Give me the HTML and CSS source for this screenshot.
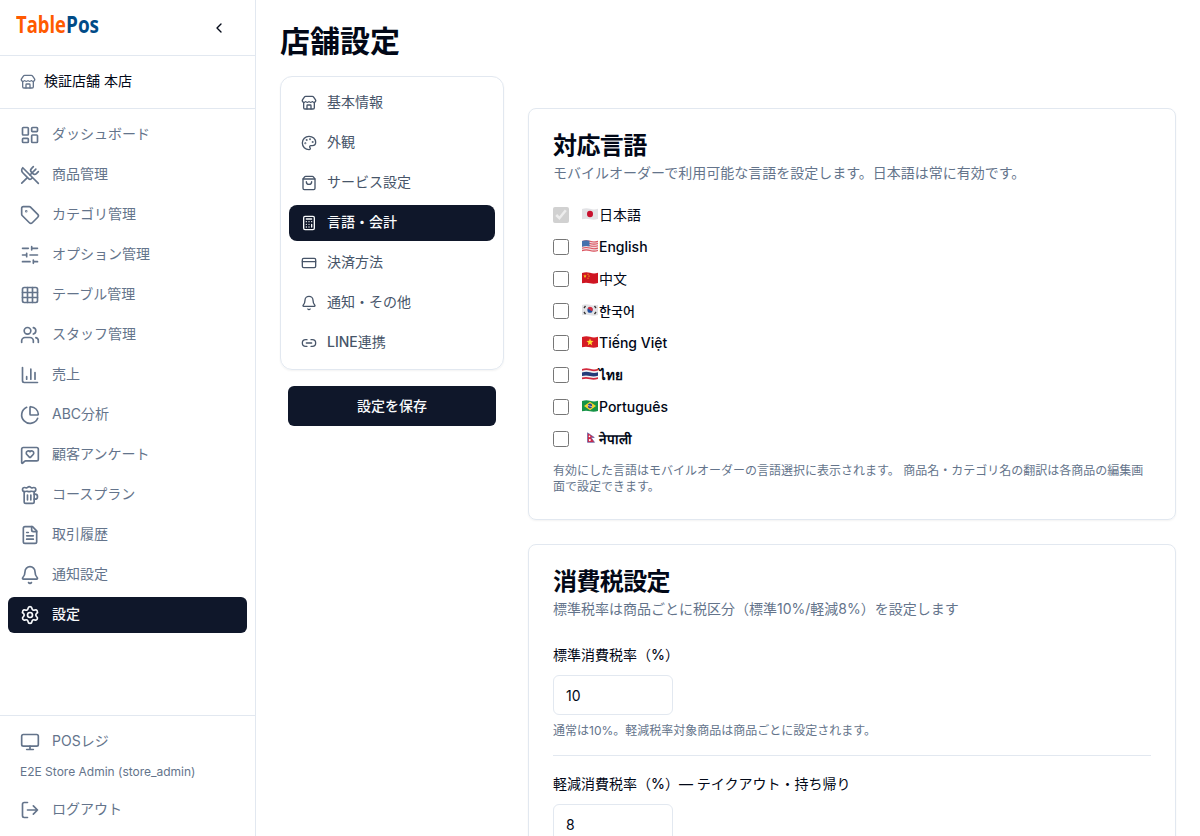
FILE: index.html
```
<!DOCTYPE html>
<html lang="ja">
<head>
    <meta charset="UTF-8">
    <meta name="viewport" content="width=device-width, initial-scale=1.0">
    <title>TablePos - 店舗設定</title>
    <link rel="stylesheet" href="styles.css">
</head>
<body>
    <svg class="defs" width="0" height="0">
        <symbol id="i-store" viewBox="0 0 24 24"><path d="M15 21v-5a1 1 0 0 0-1-1h-4a1 1 0 0 0-1 1v5"/><path d="M17.774 10.31a1.12 1.12 0 0 0-1.549 0 2.5 2.5 0 0 1-3.451 0 1.12 1.12 0 0 0-1.548 0 2.5 2.5 0 0 1-3.452 0 1.12 1.12 0 0 0-1.549 0 2.5 2.5 0 0 1-3.77-3.248l2.889-4.184A2 2 0 0 1 7 2h10a2 2 0 0 1 1.653.873l2.895 4.192a2.5 2.5 0 0 1-3.774 3.244"/><path d="M4 10.95V19a2 2 0 0 0 2 2h12a2 2 0 0 0 2-2v-8.05"/></symbol>
        <symbol id="i-bell" viewBox="0 0 24 24"><path d="M10.268 21a2 2 0 0 0 3.464 0"/><path d="M3.262 15.326A1 1 0 0 0 4 17h16a1 1 0 0 0 .74-1.673C19.41 13.956 18 12.499 18 8A6 6 0 0 0 6 8c0 4.499-1.411 5.956-2.738 7.326"/></symbol>
    </svg>

    <div class="app">
        <aside class="sidebar">
            <div class="sidebar-head">
                <svg class="logo" width="86" height="42" viewBox="0 0 86 42"><text class="logo-a" x="0" y="27" textLength="50" lengthAdjust="spacingAndGlyphs">Table</text><text class="logo-b" x="50" y="27" textLength="33" lengthAdjust="spacingAndGlyphs">Pos</text></svg>
                <button class="collapse"><svg class="icon" width="16" height="16" viewBox="0 0 24 24"><path d="m15 18-6-6 6-6"/></svg></button>
            </div>
            <div class="store-name">
                <svg class="icon" width="16" height="16"><use href="#i-store"/></svg>
                <span>検証店舗 本店</span>
            </div>
            <nav class="menu">
                <a class="menu-item"><svg class="icon" width="20" height="20" viewBox="0 0 24 24"><rect width="7" height="9" x="3" y="3" rx="1"/><rect width="7" height="5" x="14" y="3" rx="1"/><rect width="7" height="9" x="14" y="12" rx="1"/><rect width="7" height="5" x="3" y="16" rx="1"/></svg>ダッシュボード</a>
                <a class="menu-item"><svg class="icon" width="20" height="20" viewBox="0 0 24 24"><path d="m16 2-2.3 2.3a3 3 0 0 0 0 4.2l1.8 1.8a3 3 0 0 0 4.2 0L22 8"/><path d="M15 15 3.3 3.3a4.2 4.2 0 0 0 0 6l7.3 7.3c.7.7 2 .7 2.8 0L15 15Zm0 0 7 7"/><path d="m2.1 21.8 6.4-6.3"/><path d="m19 5-7 7"/></svg>商品管理</a>
                <a class="menu-item"><svg class="icon" width="20" height="20" viewBox="0 0 24 24"><path d="M12.586 2.586A2 2 0 0 0 11.172 2H4a2 2 0 0 0-2 2v7.172a2 2 0 0 0 .586 1.414l8.704 8.704a2.426 2.426 0 0 0 3.42 0l6.58-6.58a2.426 2.426 0 0 0 0-3.42z"/><circle cx="7.5" cy="7.5" r=".5"/></svg>カテゴリ管理</a>
                <a class="menu-item"><svg class="icon" width="20" height="20" viewBox="0 0 24 24"><path d="M21 4h-7M10 4H3M21 12h-9M8 12H3M21 20h-5M12 20H3M14 2v4M8 10v4M16 18v4"/></svg>オプション管理</a>
                <a class="menu-item"><svg class="icon" width="20" height="20" viewBox="0 0 24 24"><rect width="18" height="18" x="3" y="3" rx="2"/><path d="M3 9h18M3 15h18M9 3v18M15 3v18"/></svg>テーブル管理</a>
                <a class="menu-item"><svg class="icon" width="20" height="20" viewBox="0 0 24 24"><path d="M16 21v-2a4 4 0 0 0-4-4H6a4 4 0 0 0-4 4v2"/><circle cx="9" cy="7" r="4"/><path d="M22 21v-2a4 4 0 0 0-3-3.87"/><path d="M16 3.13a4 4 0 0 1 0 7.75"/></svg>スタッフ管理</a>
                <a class="menu-item"><svg class="icon" width="20" height="20" viewBox="0 0 24 24"><path d="M3 3v16a2 2 0 0 0 2 2h16"/><path d="M18 17V9M13 17V5M8 17v-3"/></svg>売上</a>
                <a class="menu-item"><svg class="icon" width="20" height="20" viewBox="0 0 24 24"><path d="M21 12c.552 0 1.005-.449.95-.998a10 10 0 0 0-8.953-8.951c-.55-.055-.998.398-.998.95v8a1 1 0 0 0 1 1z"/><path d="M21.21 15.89A10 10 0 1 1 8 2.83"/></svg>ABC分析</a>
                <a class="menu-item"><svg class="icon" width="20" height="20" viewBox="0 0 24 24"><path d="M22 17a2 2 0 0 1-2 2H6.828a2 2 0 0 0-1.414.586l-2.202 2.202A.71.71 0 0 1 2 21.286V5a2 2 0 0 1 2-2h16a2 2 0 0 1 2 2z"/><path d="M7.5 9.5c0 .687.265 1.383.697 1.844l3.009 3.264a1.14 1.14 0 0 0 .407.314 1 1 0 0 0 .783-.004 1.14 1.14 0 0 0 .398-.31l3.008-3.264A2.77 2.77 0 0 0 16.5 9.5 2.5 2.5 0 0 0 12 8a2.5 2.5 0 0 0-4.5 1.5"/></svg>顧客アンケート</a>
                <a class="menu-item"><svg class="icon" width="20" height="20" viewBox="0 0 24 24"><path d="M17 11h1a3 3 0 0 1 0 6h-1M9 12v6M13 12v6"/><path d="M14 7.5c-1 0-1.44.5-3 .5s-2-.5-3-.5-1.72.5-2.5.5a2.5 2.5 0 0 1 0-5c.78 0 1.57.5 2.5.5S9.44 2 11 2s2 1.5 3 1.5 1.72-.5 2.5-.5a2.5 2.5 0 0 1 0 5c-.78 0-1.5-.5-2.5-.5Z"/><path d="M5 8v12a2 2 0 0 0 2 2h8a2 2 0 0 0 2-2V8"/></svg>コースプラン</a>
                <a class="menu-item"><svg class="icon" width="20" height="20" viewBox="0 0 24 24"><path d="M15 2H6a2 2 0 0 0-2 2v16a2 2 0 0 0 2 2h12a2 2 0 0 0 2-2V7Z"/><path d="M14 2v4a2 2 0 0 0 2 2h4M10 9H8M16 13H8M16 17H8"/></svg>取引履歴</a>
                <a class="menu-item"><svg class="icon" width="20" height="20"><use href="#i-bell"/></svg>通知設定</a>
                <a class="menu-item active"><svg class="icon" width="20" height="20" viewBox="0 0 24 24"><path d="M9.671 4.136a2.34 2.34 0 0 1 4.659 0 2.34 2.34 0 0 0 3.319 1.915 2.34 2.34 0 0 1 2.33 4.033 2.34 2.34 0 0 0 0 3.831 2.34 2.34 0 0 1-2.33 4.033 2.34 2.34 0 0 0-3.319 1.915 2.34 2.34 0 0 1-4.659 0 2.34 2.34 0 0 0-3.32-1.915 2.34 2.34 0 0 1-2.33-4.033 2.34 2.34 0 0 0 0-3.831A2.34 2.34 0 0 1 6.35 6.051a2.34 2.34 0 0 0 3.319-1.915"/><circle cx="12" cy="12" r="3"/></svg>設定</a>
            </nav>
            <div class="sidebar-foot">
                <a class="menu-item"><svg class="icon" width="20" height="20" viewBox="0 0 24 24"><rect width="20" height="14" x="2" y="3" rx="2"/><path d="M8 21h8M12 17v4"/></svg>POSレジ</a>
                <div class="user">E2E Store Admin (store_admin)</div>
                <a class="menu-item"><svg class="icon" width="20" height="20" viewBox="0 0 24 24"><path d="M9 21H5a2 2 0 0 1-2-2V5a2 2 0 0 1 2-2h4M16 17l5-5-5-5M21 12H9"/></svg>ログアウト</a>
            </div>
        </aside>

        <main class="main">
            <h1>店舗設定</h1>
            <div class="columns">
                <div class="tabs-column">
                    <div class="tabs">
                        <a class="tab"><svg class="icon" width="16" height="16"><use href="#i-store"/></svg>基本情報</a>
                        <a class="tab"><svg class="icon" width="16" height="16" viewBox="0 0 24 24"><path d="M12 22a1 1 0 0 1 0-20 10 9 0 0 1 10 9 5 5 0 0 1-5 5h-2.25a1.75 1.75 0 0 0-1.4 2.8l.3.4a1.75 1.75 0 0 1-1.4 2.8z"/><circle cx="13.5" cy="6.5" r=".5"/><circle cx="17.5" cy="10.5" r=".5"/><circle cx="6.5" cy="12.5" r=".5"/><circle cx="8.5" cy="7.5" r=".5"/></svg>外観</a>
                        <a class="tab"><svg class="icon" width="16" height="16" viewBox="0 0 24 24"><path d="M16 10a4 4 0 0 1-8 0M3.103 6.034h17.794"/><path d="M3.4 5.467a2 2 0 0 0-.4 1.2V20a2 2 0 0 0 2 2h14a2 2 0 0 0 2-2V6.667a2 2 0 0 0-.4-1.2l-2-2.667A2 2 0 0 0 17 2H7a2 2 0 0 0-1.6.8z"/></svg>サービス設定</a>
                        <a class="tab active"><svg class="icon" width="16" height="16" viewBox="0 0 24 24"><rect width="16" height="20" x="4" y="2" rx="2"/><path d="M8 6h8M16 14v4M16 10h.01M12 10h.01M8 10h.01M12 14h.01M8 14h.01M12 18h.01M8 18h.01"/></svg>言語・会計</a>
                        <a class="tab"><svg class="icon" width="16" height="16" viewBox="0 0 24 24"><rect width="20" height="14" x="2" y="5" rx="2"/><path d="M2 10h20"/></svg>決済方法</a>
                        <a class="tab"><svg class="icon" width="16" height="16"><use href="#i-bell"/></svg>通知・その他</a>
                        <a class="tab"><svg class="icon" width="16" height="16" viewBox="0 0 24 24"><path d="M9 17H7A5 5 0 0 1 7 7h2M15 7h2a5 5 0 1 1 0 10h-2M8 12h8"/></svg><span><span class="latin">LINE</span>連携</span></a>
                    </div>
                    <button class="save">設定を保存</button>
                </div>

                <div class="panels">
                    <section class="card">
                        <h2>対応言語</h2>
                        <p class="desc">モバイルオーダーで利用可能な言語を設定します。日本語は常に有効です。</p>
                        <div class="langs">
                            <label class="lang"><input type="checkbox" checked disabled><svg class="flag" viewBox="0 0 16 11" preserveAspectRatio="none"><path fill="#e2e2e5" d="M0 1Q4-.5 8 .7T16 .7V10Q12 11.2 8 10.3T0 10.3Z"/><circle cx="8" cy="5.5" r="3" fill="#c8102e"/></svg><span>日本語</span></label>
                            <label class="lang"><input type="checkbox"><svg class="flag" viewBox="0 0 16 11" preserveAspectRatio="none"><path fill="#f1dadd" d="M0 1Q4-.5 8 .7T16 .7V10Q12 11.2 8 10.3T0 10.3Z"/><path fill="none" stroke="#dc5560" d="M0 1.4Q4 0 8 1.2T16 1.2M0 3.4Q4 2 8 3.2T16 3.2M0 5.4Q4 4 8 5.2T16 5.2M0 7.6Q4 6.2 8 7.4T16 7.4M0 9.8Q4 8.4 8 9.6T16 9.6"/><path fill="#4571ad" d="M0 1Q4-.5 7.5.6V6Q4 5 0 6.3Z"/></svg><span class="latin">English</span></label>
                            <label class="lang"><input type="checkbox"><svg class="flag" viewBox="0 0 16 11" preserveAspectRatio="none"><path fill="#cf1522" d="M0 1Q4-.5 8 .7T16 .7V10Q12 11.2 8 10.3T0 10.3Z"/><path fill="#f5c518" d="m3 2 .5 1.1 1.2.1-.9.8.3 1.2L3 4.6l-1.1.6.3-1.2-.9-.8 1.2-.1zM5.5 1.5h1v1h-1zM6.5 3.3h1v1h-1zM5.5 5.2h1v1h-1z"/></svg><span>中文</span></label>
                            <label class="lang"><input type="checkbox"><svg class="flag" viewBox="0 0 16 11" preserveAspectRatio="none"><path fill="#e2e2e5" d="M0 1Q4-.5 8 .7T16 .7V10Q12 11.2 8 10.3T0 10.3Z"/><circle cx="8" cy="5.5" r="2.6" fill="#1f4c9c"/><path fill="#d42a3c" d="M5.6 4.4a2.6 2.6 0 0 1 5 1.6Q9.5 7 8 5.6T5.6 4.4Z"/><path stroke="#333" stroke-width="1.3" d="m2 3.8 1.5-2M12.5 1.8l1.5 2M2 7.3l1.5 2M12.5 9.3l1.5-2"/></svg><span class="ko" lang="ko">한국어</span></label>
                            <label class="lang"><input type="checkbox"><svg class="flag" viewBox="0 0 16 11" preserveAspectRatio="none"><path fill="#d51c25" d="M0 1Q4-.5 8 .7T16 .7V10Q12 11.2 8 10.3T0 10.3Z"/><path fill="#ffe02e" d="m8 2 .9 2.4 2.6.1-2 1.6.7 2.5L8 7.2 5.8 8.6l.7-2.5-2-1.6 2.6-.1z"/></svg><span class="latin">Tiếng Việt</span></label>
                            <label class="lang"><input type="checkbox"><svg class="flag" viewBox="0 0 16 11" preserveAspectRatio="none"><path fill="#d3293d" d="M0 1Q4-.5 8 .7T16 .7V10Q12 11.2 8 10.3T0 10.3Z"/><path fill="#f2f2f4" d="M0 2.6Q4 1.1 8 2.3T16 2.3V8.5Q12 9.7 8 8.8T0 8.8Z"/><path fill="#263c78" d="M0 4.2Q4 2.7 8 3.9T16 3.9V7Q12 8.2 8 7.3T0 7.3Z"/></svg><span class="heavy" lang="th">ไทย</span></label>
                            <label class="lang"><input type="checkbox"><svg class="flag" viewBox="0 0 16 11" preserveAspectRatio="none"><path fill="#169447" d="M0 1Q4-.5 8 .7T16 .7V10Q12 11.2 8 10.3T0 10.3Z"/><path fill="#f6d32d" d="M8 1.5 14 5.5 8 9.5 2 5.5Z"/><circle cx="8" cy="5.5" r="2.2" fill="#29458f"/><path stroke="#dfe6ee" stroke-width=".7" d="m6 5 4 1.2"/></svg><span class="latin">Português</span></label>
                            <label class="lang"><input type="checkbox"><svg class="flag" viewBox="0 0 16 11" preserveAspectRatio="none"><path fill="#d42745" stroke="#4a5ca8" stroke-width=".6" d="M5.5.7 12.3 5H9l3.5 4.5h-7Z"/><circle cx="7.5" cy="4" r=".8" fill="#fff"/><circle cx="7.8" cy="7.4" r="1" fill="#fff"/></svg><span class="heavy" lang="ne">नेपाली</span></label>
                        </div>
                        <p class="note">有効にした言語はモバイルオーダーの言語選択に表示されます。 商品名・カテゴリ名の翻訳は各商品の編集画面で設定できます。</p>
                    </section>

                    <section class="card">
                        <h2>消費税設定</h2>
                        <p class="desc">標準税率は商品ごとに税区分（標準10%/軽減8%）を設定します</p>
                        <div class="field">
                            <label for="tax">標準消費税率（<span class="latin">%</span>）</label>
                            <input type="text" id="tax" value="10">
                            <p class="note">通常は10%。軽減税率対象商品は商品ごとに設定されます。</p>
                        </div>
                        <div class="field divided">
                            <label for="reduced">軽減消費税率（<span class="latin">%</span>）<span class="latin">—</span> テイクアウト・持ち帰り</label>
                            <input type="text" id="reduced" value="8">
                        </div>
                    </section>
                </div>
            </div>
        </main>
    </div>
</body>
</html>
```
FILE: styles.css
```
* {
    box-sizing: border-box;
}

body {
    margin: 0;
    font-family: Inter, "Noto Sans CJK JP", sans-serif;
    font-size: 14px;
    line-height: 20px;
    color: #020817;
    background-color: #fff;
    overflow: hidden;
}

h1, h2, p {
    margin: 0;
}

button, input {
    font-family: inherit;
    font-size: inherit;
    color: inherit;
}

.defs {
    display: none;
}

.icon {
    flex-shrink: 0;
    fill: none;
    stroke: currentColor;
    stroke-width: 2;
    stroke-linecap: round;
    stroke-linejoin: round;
}

.latin {
    font-weight: 500;
}

.app {
    display: flex;
    height: 100vh;
}

/* sidebar */
.sidebar {
    display: flex;
    flex-direction: column;
    flex-shrink: 0;
    width: 256px;
    border-right: 1px solid #e2e8f0;
}

.sidebar-head {
    display: flex;
    align-items: center;
    justify-content: space-between;
    height: 56px;
    padding: 0 28px 0 16px;
    border-bottom: 1px solid #e2e8f0;
}

.logo {
    font-family: "Open Sans", sans-serif;
    font-size: 23px;
    font-weight: 700;
    margin-bottom: 1px;
}

.logo-a {
    fill: #ff5a00;
}

.logo-b {
    fill: #004b87;
}

.collapse {
    display: flex;
    padding: 0;
    border: none;
    background: none;
}

.store-name {
    display: flex;
    align-items: center;
    gap: 8px;
    height: 53px;
    padding: 0 20px 2px;
    border-bottom: 1px solid #e2e8f0;
}

/* keeps icons centred while the text sits a pixel higher */
.store-name .icon,
.menu-item .icon,
.tab .icon {
    margin-top: 2px;
}

.store-name .icon {
    color: #64748b;
}

.menu {
    display: flex;
    flex-direction: column;
    flex: 1;
    gap: 4px;
    padding: 8px;
}

.menu-item {
    display: flex;
    align-items: center;
    gap: 12px;
    height: 36px;
    padding: 0 12px 2px;
    border-radius: 6px;
    color: #64748b;
}

.menu-item.active,
.tab.active {
    background-color: #0f172a;
    color: #f8fafc;
    font-weight: 500;
}

.sidebar-foot {
    padding: 8px;
    border-top: 1px solid #e2e8f0;
}

.user {
    padding: 4px 12px 12px;
    font-size: 12px;
    line-height: 16px;
    color: #64748b;
}

/* settings */
.main {
    flex: 1;
    padding: 24px;
}

h1 {
    font-size: 30px;
    line-height: 34px;
    font-weight: 700;
    margin-bottom: 18px;
}

.columns {
    display: flex;
    align-items: flex-start;
    gap: 24px;
}

.tabs-column {
    display: flex;
    flex-direction: column;
    gap: 16px;
    width: 224px;
}

.tabs {
    display: flex;
    flex-direction: column;
    gap: 4px;
    padding: 8px;
    border: 1px solid #e2e8f0;
    border-radius: 12px;
    box-shadow: 0 1px 2px rgba(0, 0, 0, 0.05);
}

.tab {
    display: flex;
    align-items: center;
    gap: 10px;
    height: 36px;
    padding: 0 12px 2px;
    border-radius: 8px;
    color: #475569;
}

.save {
    height: 40px;
    margin: 0 8px;
    padding: 0 0 3px;
    border: none;
    border-radius: 6px;
    background-color: #0f172a;
    color: #f8fafc;
    font-weight: 500;
}

.panels {
    display: flex;
    flex-direction: column;
    flex: 1;
    gap: 24px;
    padding-top: 32px;
}

.card {
    padding: 24px;
    border: 1px solid #e2e8f0;
    border-radius: 8px;
    box-shadow: 0 1px 2px rgba(0, 0, 0, 0.05);
}

h2 {
    font-size: 24px;
    line-height: 26px;
    font-weight: 600;
    letter-spacing: -0.025em;
    margin-bottom: 4px;
}

.desc {
    margin-bottom: 24px;
    color: #64748b;
}

.langs {
    display: flex;
    flex-direction: column;
    gap: 16px;
    margin-bottom: 16px;
}

.lang {
    display: flex;
    align-items: center;
    height: 16px;
}

.lang input {
    width: 16px;
    height: 16px;
    margin: 0 13px 0 0;
}

.flag {
    width: 16px;
    height: 12px;
    margin: 0 1px 2px 0;
}

.ko {
    font-family: "Noto Sans CJK KR", sans-serif;
    font-size: 13px;
    font-weight: 500;
}

.heavy {
    font-size: 13.5px;
    font-weight: 700;
}

.note {
    font-size: 12px;
    line-height: 16px;
    color: #64748b;
}

.field label {
    display: block;
    line-height: 24px;
    margin-bottom: 8px;
}

.field input {
    display: block;
    width: 120px;
    height: 40px;
    padding: 0 12px;
    border: 1px solid #e2e8f0;
    border-radius: 6px;
    margin-bottom: 8px;
}

.divided {
    margin-top: 16px;
    padding-top: 16px;
    border-top: 1px solid #e2e8f0;
}
```
